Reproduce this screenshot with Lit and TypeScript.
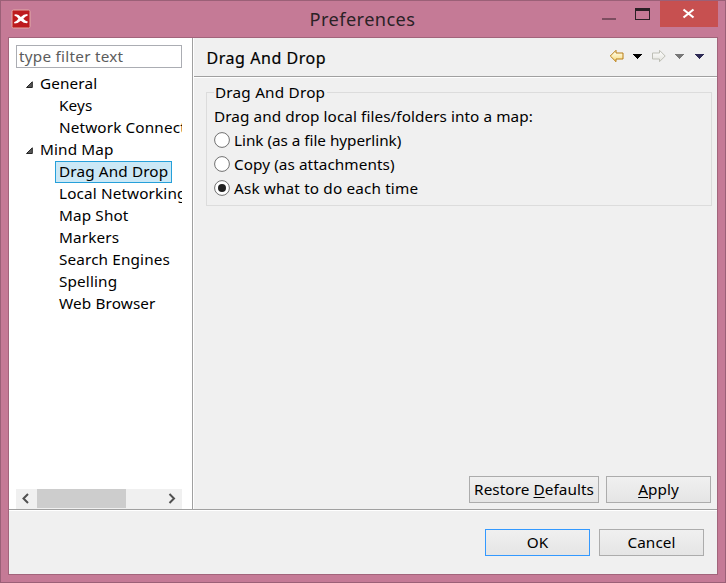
import { LitElement, html, css, svg } from "lit";
import { customElement, property, state } from "lit/decorators.js";
import { classMap } from "lit/directives/class-map.js";

const FONT = css`"Noto Sans", "Noto Sans CJK SC", sans-serif`;

interface TreeNode {
  label: string;
  children?: TreeNode[];
}

const TREE: TreeNode[] = [
  { label: "General", children: [{ label: "Keys" }, { label: "Network Connections" }] },
  {
    label: "Mind Map",
    children: [
      { label: "Drag And Drop" },
      { label: "Local Networking" },
      { label: "Map Shot" },
      { label: "Markers" },
      { label: "Search Engines" },
      { label: "Spelling" },
      { label: "Web Browser" },
    ],
  },
];

const OPTIONS = ["Link (as a file hyperlink)", "Copy (as attachments)", "Ask what to do each time"];

@customElement("title-bar")
class TitleBar extends LitElement {
  static styles = css`
    :host { display: grid; grid-template-columns: 1fr auto 1fr; height: 36px; }
    .icon { margin: 8px 0 0 10px; width: 20px; height: 20px; }
    .title { font: 18.2px/36px ${FONT}; color: #2b2226; letter-spacing: 0.42px; margin-left: -1px; }
    .controls { justify-self: end; display: flex; height: 26px; margin-right: 7px; }
    svg { display: block; }
    .close { width: 58px; height: 26px; background: #c75050; }
  `;
  render() {
    return html`
      <svg class="icon" viewBox="0 0 20 20">
        <rect x="1" y="1" width="18" height="18" rx="1.5" fill="#bd1a1d" stroke="#e3a9a6" />
        <path d="M3.500 5.500Q7 4.500 9.800 8Q12.500 5 16.300 5L16.800 6.500Q14 7.500 12.300 9.800Q14 12 17 12.800L16 14.300Q12.500 14.300 9.800 11.700Q7 14.500 3.500 14.500L3 13.200Q6 12 7.400 9.800Q6 7.500 3.500 6.800Z" fill="#fff" />
      </svg>
      <div class="title">Preferences</div>
      <div class="controls">
        <svg width="66" height="26" viewBox="0 0 66 26" shape-rendering="crispEdges">
          <rect x="8" y="17" width="14" height="2" fill="#7d4d60" />
          <path d="M41 7h15v12H41zM42 10v8h13v-8z" fill="#2a2025" fill-rule="evenodd" />
        </svg>
        <div class="close">
          <svg width="58" height="26" viewBox="0 0 58 26">
            <path d="M23.500 8.500L33.500 16.500M33.500 8.500L23.500 16.500" fill="none" stroke="#fff" stroke-width="2.200" />
          </svg>
        </div>
      </div>
    `;
  }
}

@customElement("preference-tree")
class PreferenceTree extends LitElement {
  @property() selected = "";
  static styles = css`
    :host { display: flex; flex-direction: column; width: 166px; padding: 7px 10px 0 7px; background: #fff; font: 15.300px/22px ${FONT}; letter-spacing: 0.130px; color: #000; }
    .filter { box-sizing: border-box; height: 23px; border: 1px solid #abadb3; padding: 0 2px; line-height: 21px; color: #5c5c5c; letter-spacing: 0.250px; }
    .tree { flex: 1; overflow: hidden; padding-top: 5px; }
    .row { display: flex; height: 22px; line-height: 20px; white-space: nowrap; }
    .arrow { width: 8px; height: 8px; margin: 8px 7px 0 9px; flex: none; }
    .leaf { box-sizing: border-box; margin-left: 39px; padding: 0 3px; border: 1px solid transparent; line-height: 18px; }
    .leaf.on { background: #cbe8f6; border-color: #26a0da; }
    .scroll { display: flex; height: 20px; background: #f0f0f0; justify-content: space-between; }
    .thumb { width: 89px; height: 19px; background: #cdcdcd; margin-right: auto; }
    svg { display: block; }
  `;
  private pick(label: string) {
    this.dispatchEvent(new CustomEvent("pick", { detail: label }));
  }
  render() {
    return html`
      <div class="filter">type filter text</div>
      <div class="tree">
        ${TREE.map(
          (group) => html`
            <div class="row">
              <svg class="arrow" viewBox="0 0 8 8"><path d="M7.300 .8v5.700H1.500z" fill="#595959" stroke="#262626" /></svg>
              <span>${group.label}</span>
            </div>
            ${group.children?.map(
              (c) => html`<div class="row" @click=${() => this.pick(c.label)}>
                <span class=${classMap({ leaf: true, on: c.label === this.selected })}>${c.label}</span>
              </div>`
            )}
          `
        )}
      </div>
      <div class="scroll">
        <svg width="21" height="20" viewBox="0 0 21 20"><path d="M12 5l-4.500 4.500 4.500 4.500" fill="none" stroke="#505050" stroke-width="2" /></svg>
        <div class="thumb"></div>
        <svg width="21" height="20" viewBox="0 0 21 20"><path d="M8.500 5l4.500 4.500-4.500 4.500" fill="none" stroke="#505050" stroke-width="2" /></svg>
      </div>
    `;
  }
}

@customElement("nav-icons")
class NavIcons extends LitElement {
  static styles = css`
    :host { display: block; padding-top: 1px; }
    svg { display: block; }
  `;
  render() {
    const caret = (x: number, fill: string) => svg`<path d="M${x} 6h9v1h-1v1h-1v1h-1v1h-1v1h-1v-1h-1v-1h-1v-1h-1v-1h-1z" fill=${fill} shape-rendering="crispEdges" />`;
    const arrow = "M.800 8.500L6.500 2.800V5.500H13.500V11.500H6.500V14.200Z";
    return html`
      <svg width="96" height="16" viewBox="0 0 96 16">
        <defs>
          <linearGradient id="gold" x1="0" y1="0" x2="0" y2="1"><stop offset="0.200" stop-color="#fffbe0" /><stop offset="1" stop-color="#f6d878" /></linearGradient>
          <linearGradient id="pale" x1="0" y1="0" x2="0" y2="1"><stop offset="0" stop-color="#fff" /><stop offset="1" stop-color="#e2e2dc" /></linearGradient>
        </defs>
        <path d=${arrow} transform="translate(-.5 -.5)" fill="url(#gold)" stroke="#b87c14" />
        ${caret(23, "#000")}
        <path d=${arrow} transform="translate(56 -.5) scale(-1 1)" fill="url(#pale)" stroke="#bdbeb5" />
        ${caret(65, "#777")}
        ${caret(85, "#2d2a55")}
      </svg>
    `;
  }
}

@customElement("preference-page")
class PreferencePage extends LitElement {
  @property() heading = "";
  @state() private choice = 2;
  static styles = css`
    :host { display: flex; flex-direction: column; flex: 1; min-width: 0; font: 15.300px/22px ${FONT}; letter-spacing: 0.070px; color: #000; }
    .head { display: flex; justify-content: space-between; height: 38px; box-sizing: border-box; padding: 9px 11px 0 12.500px; font-size: 16px; letter-spacing: 0.550px; -webkit-text-stroke: 0.200px #000; }
    .rule { height: 1px; background: #a0a0a0; border-bottom: 1px solid #fff; }
    .group { margin: 14px 5px 0 12px; height: 114px; box-sizing: border-box; border: 1px solid #dcdcdc; padding: 0 7px; }
    .legend { display: block; width: max-content; height: 22px; margin-top: -12px; padding: 0 2px 0 1px; background: #f0f0f0; letter-spacing: 0.200px; }
    .line { margin-top: 2px; margin-bottom: 1px; }
    .option { display: flex; gap: 4px; height: 24px; line-height: 24px; align-items: center; }
    .option:nth-of-type(2) { letter-spacing: -0.030px; }
    .option:nth-of-type(4) { letter-spacing: 0.150px; }
    .radio { width: 16px; height: 16px; flex: none; }
    .buttons { display: flex; gap: 7px; margin: auto 6px 6px auto; }
    u { text-decoration-thickness: 1px; text-underline-offset: 2px; }
  `;
  render() {
    return html`
      <div class="head"><span>${this.heading}</span><nav-icons></nav-icons></div>
      <div class="rule"></div>
      <div class="group">
        <span class="legend">${this.heading}</span>
        <div class="line">Drag and drop local files/folders into a map:</div>
        ${OPTIONS.map(
          (label, i) => html`
            <div class="option" @click=${() => (this.choice = i)}>
              <svg class="radio" viewBox="0 0 16 16">
                <circle cx="8" cy="8" r="7.400" fill="#fff" stroke="#707070" />
                ${i === this.choice ? svg`<circle cx="8" cy="8" r="4" fill="#212121" />` : ""}
              </svg>
              <span>${label}</span>
            </div>
          `
        )}
      </div>
      <div class="buttons">
        <push-button class="wide">Restore <u>D</u>efaults</push-button>
        <push-button><u>A</u>pply</push-button>
      </div>
    `;
  }
}

@customElement("push-button")
class PushButton extends LitElement {
  static styles = css`
    :host { box-sizing: border-box; display: block; width: 105px; height: 27px; border: 1px solid #acacac; background: linear-gradient(#f0f0f0, #e5e5e5); font: 15.300px/25px ${FONT}; letter-spacing: 0.070px; color: #000; text-align: center; white-space: nowrap; }
    :host(.wide) { width: 130px; }
    :host(.default) { border-color: #3399ff; }
  `;
  render() {
    return html`<slot></slot>`;
  }
}

@customElement("app-root")
class AppRoot extends LitElement {
  @state() private page = "Drag And Drop";
  static styles = css`
    :host { display: flex; flex-direction: column; box-sizing: border-box; width: 726px; height: 583px; border: 1px solid #9b6077; background: #c57a96; overflow: hidden; }
    .client { flex: 1; min-height: 0; margin: 0 7px 7px; border: 1px solid #a2647b; background: #f0f0f0; display: flex; flex-direction: column; }
    .body { display: flex; height: 471px; }
    .sash { width: 1px; background: #a0a0a0; border-right: 1px solid #fff; }
    .rule { height: 1px; background: #a0a0a0; border-bottom: 1px solid #fff; }
    .footer { display: flex; justify-content: flex-end; gap: 9px; padding: 18px 13px 0 0; }
  `;
  render() {
    return html`
      <title-bar></title-bar>
      <div class="client">
        <div class="body">
          <preference-tree .selected=${this.page} @pick=${(e: CustomEvent) => (this.page = e.detail)}></preference-tree>
          <div class="sash"></div>
          <preference-page .heading=${this.page}></preference-page>
        </div>
        <div class="rule"></div>
        <div class="footer">
          <push-button class="default">OK</push-button>
          <push-button>Cancel</push-button>
        </div>
      </div>
    `;
  }
}
